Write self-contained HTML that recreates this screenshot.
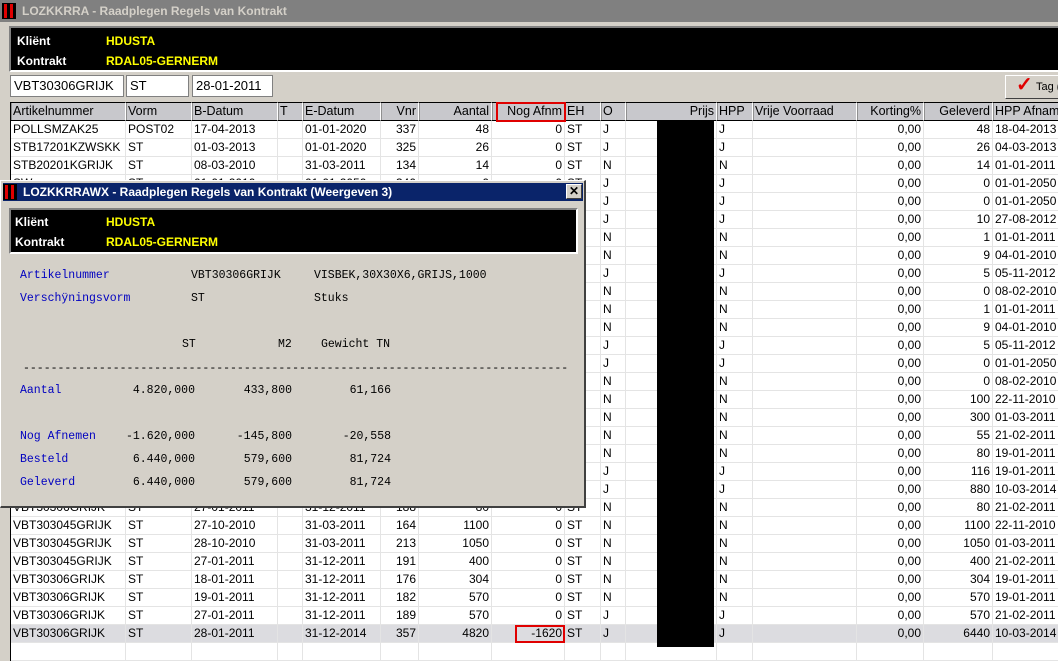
<!DOCTYPE html>
<html><head><meta charset="utf-8">
<style>
*{margin:0;padding:0;box-sizing:border-box}
body{width:1058px;height:647px;overflow:hidden;background:#d4d0c8;font-family:"Liberation Sans",Arial,sans-serif;font-size:12px;position:relative}
.abs{position:absolute}
.tb{left:0;top:0;width:1058px;height:22px;background:#808080;color:#d4d0c8;font-weight:bold;font-size:12px;line-height:22px}
.logo{position:absolute;width:14px;height:16px;background:#000;}
.logo i{position:absolute;top:1px;width:3px;height:14px;background:#e00000}
.blk{background:#000;border:2px solid #fff;border-top-color:#808080;border-left-color:#808080;color:#fff;font-weight:bold}
.blk .l{position:absolute;left:6px}
.blk .v{position:absolute;color:#ffff00}
.inp{background:#fff;border:1px solid #808080;height:22px;line-height:20px;padding-left:3px;font-size:13px}
table{position:absolute;left:10px;top:102px;width:1060px;border-collapse:separate;border-spacing:0;table-layout:fixed;background:#fff;border-left:1px solid #000}
td{height:18px;border-right:1px solid #e4e4e4;border-bottom:1px solid #e4e4e4;padding:0 2px;white-space:nowrap;overflow:hidden;font-size:12px;line-height:17px}
tr.h td{background:#c8c8cc;border-right:1px solid #fff;border-bottom:1px solid #000;font-size:12.5px;line-height:17px;border-top:1px solid #000;box-shadow:inset 1px 0 0 #909090}
td.r{text-align:right}
tr.sel td{background:#dcdce0}
.dlg{left:0;top:180px;width:586px;height:328px;background:#d4d0c8;border:1px solid #fff;border-right:2px solid #404040;border-bottom:2px solid #404040}
.dt{left:2px;top:2px;width:580px;height:18px;background:#0a246a;color:#fff;font-weight:bold;line-height:18px;font-size:12px}
.m{position:absolute;font-family:"Liberation Mono","DejaVu Sans Mono",monospace;font-size:11.5px;line-height:13px;white-space:pre;color:#000}
.b{color:#0000c0}
.rt{text-align:right}
</style></head><body>
<div class="abs tb"><div class="logo" style="left:2px;top:3px"><i style="left:2px"></i><i style="left:8px"></i></div><span style="position:absolute;left:22px">LOZKKRRA - Raadplegen Regels van Kontrakt</span></div>
<div class="abs blk" style="left:9px;top:26px;width:1060px;height:46px"><span class="l" style="top:6px">Kliënt</span><span class="v" style="left:95px;top:6px">HDUSTA</span><span class="l" style="top:26px">Kontrakt</span><span class="v" style="left:95px;top:26px">RDAL05-GERNERM</span></div>
<div class="abs inp" style="left:10px;top:75px;width:114px">VBT30306GRIJK</div>
<div class="abs inp" style="left:126px;top:75px;width:63px">ST</div>
<div class="abs inp" style="left:192px;top:75px;width:81px">28-01-2011</div>
<div class="abs" style="left:1005px;top:75px;width:60px;height:24px;border:1px solid #fff;border-right-color:#404040;border-bottom-color:#404040;background:#d4d0c8;font-size:11px;line-height:22px"><span style="position:absolute;left:10px;top:-2px;color:#e00000;font-size:20px;font-weight:bold">✓</span><span style="position:absolute;left:30px">Tag (</span></div>
<table>
<colgroup><col style="width:115px"><col style="width:66px"><col style="width:86px"><col style="width:25px"><col style="width:78px"><col style="width:38px"><col style="width:73px"><col style="width:73px"><col style="width:36px"><col style="width:25px"><col style="width:91px"><col style="width:36px"><col style="width:104px"><col style="width:67px"><col style="width:69px"><col style="width:78px"></colgroup>
<tr class="h"><td>Artikelnummer</td><td>Vorm</td><td>B-Datum</td><td>T</td><td>E-Datum</td><td class="r">Vnr</td><td class="r">Aantal</td><td class="r">Nog Afnm</td><td>EH</td><td>O</td><td class="r">Prijs</td><td>HPP</td><td>Vrije Voorraad</td><td class="r">Korting%</td><td class="r">Geleverd</td><td>HPP Afname</td></tr>
<tr><td>POLLSMZAK25</td><td>POST02</td><td>17-04-2013</td><td></td><td>01-01-2020</td><td class="r">337</td><td class="r">48</td><td class="r">0</td><td>ST</td><td>J</td><td></td><td>J</td><td></td><td class="r">0,00</td><td class="r">48</td><td>18-04-2013</td></tr>
<tr><td>STB17201KZWSKK</td><td>ST</td><td>01-03-2013</td><td></td><td>01-01-2020</td><td class="r">325</td><td class="r">26</td><td class="r">0</td><td>ST</td><td>J</td><td></td><td>J</td><td></td><td class="r">0,00</td><td class="r">26</td><td>04-03-2013</td></tr>
<tr><td>STB20201KGRIJK</td><td>ST</td><td>08-03-2010</td><td></td><td>31-03-2011</td><td class="r">134</td><td class="r">14</td><td class="r">0</td><td>ST</td><td>N</td><td></td><td>N</td><td></td><td class="r">0,00</td><td class="r">14</td><td>01-01-2011</td></tr>
<tr><td>SW</td><td>ST</td><td>01-01-2010</td><td></td><td>01-01-2050</td><td class="r">340</td><td class="r">0</td><td class="r">0</td><td>ST</td><td>J</td><td></td><td>J</td><td></td><td class="r">0,00</td><td class="r">0</td><td>01-01-2050</td></tr>
<tr><td></td><td></td><td></td><td></td><td></td><td></td><td></td><td class="r">0</td><td>ST</td><td>J</td><td></td><td>J</td><td></td><td class="r">0,00</td><td class="r">0</td><td>01-01-2050</td></tr>
<tr><td></td><td></td><td></td><td></td><td></td><td></td><td></td><td class="r">0</td><td>ST</td><td>J</td><td></td><td>J</td><td></td><td class="r">0,00</td><td class="r">10</td><td>27-08-2012</td></tr>
<tr><td></td><td></td><td></td><td></td><td></td><td></td><td></td><td class="r">0</td><td>ST</td><td>N</td><td></td><td>N</td><td></td><td class="r">0,00</td><td class="r">1</td><td>01-01-2011</td></tr>
<tr><td></td><td></td><td></td><td></td><td></td><td></td><td></td><td class="r">0</td><td>ST</td><td>N</td><td></td><td>N</td><td></td><td class="r">0,00</td><td class="r">9</td><td>04-01-2010</td></tr>
<tr><td></td><td></td><td></td><td></td><td></td><td></td><td></td><td class="r">0</td><td>ST</td><td>J</td><td></td><td>J</td><td></td><td class="r">0,00</td><td class="r">5</td><td>05-11-2012</td></tr>
<tr><td></td><td></td><td></td><td></td><td></td><td></td><td></td><td class="r">0</td><td>ST</td><td>N</td><td></td><td>N</td><td></td><td class="r">0,00</td><td class="r">0</td><td>08-02-2010</td></tr>
<tr><td></td><td></td><td></td><td></td><td></td><td></td><td></td><td class="r">0</td><td>ST</td><td>N</td><td></td><td>N</td><td></td><td class="r">0,00</td><td class="r">1</td><td>01-01-2011</td></tr>
<tr><td></td><td></td><td></td><td></td><td></td><td></td><td></td><td class="r">0</td><td>ST</td><td>N</td><td></td><td>N</td><td></td><td class="r">0,00</td><td class="r">9</td><td>04-01-2010</td></tr>
<tr><td></td><td></td><td></td><td></td><td></td><td></td><td></td><td class="r">0</td><td>ST</td><td>J</td><td></td><td>J</td><td></td><td class="r">0,00</td><td class="r">5</td><td>05-11-2012</td></tr>
<tr><td></td><td></td><td></td><td></td><td></td><td></td><td></td><td class="r">0</td><td>ST</td><td>J</td><td></td><td>J</td><td></td><td class="r">0,00</td><td class="r">0</td><td>01-01-2050</td></tr>
<tr><td></td><td></td><td></td><td></td><td></td><td></td><td></td><td class="r">0</td><td>ST</td><td>N</td><td></td><td>N</td><td></td><td class="r">0,00</td><td class="r">0</td><td>08-02-2010</td></tr>
<tr><td></td><td></td><td></td><td></td><td></td><td></td><td></td><td class="r">0</td><td>ST</td><td>N</td><td></td><td>N</td><td></td><td class="r">0,00</td><td class="r">100</td><td>22-11-2010</td></tr>
<tr><td></td><td></td><td></td><td></td><td></td><td></td><td></td><td class="r">0</td><td>ST</td><td>N</td><td></td><td>N</td><td></td><td class="r">0,00</td><td class="r">300</td><td>01-03-2011</td></tr>
<tr><td></td><td></td><td></td><td></td><td></td><td></td><td></td><td class="r">0</td><td>ST</td><td>N</td><td></td><td>N</td><td></td><td class="r">0,00</td><td class="r">55</td><td>21-02-2011</td></tr>
<tr><td></td><td></td><td></td><td></td><td></td><td></td><td></td><td class="r">0</td><td>ST</td><td>N</td><td></td><td>N</td><td></td><td class="r">0,00</td><td class="r">80</td><td>19-01-2011</td></tr>
<tr><td></td><td></td><td></td><td></td><td></td><td></td><td></td><td class="r">0</td><td>ST</td><td>J</td><td></td><td>J</td><td></td><td class="r">0,00</td><td class="r">116</td><td>19-01-2011</td></tr>
<tr><td></td><td></td><td></td><td></td><td></td><td></td><td></td><td class="r">0</td><td>ST</td><td>J</td><td></td><td>J</td><td></td><td class="r">0,00</td><td class="r">880</td><td>10-03-2014</td></tr>
<tr><td>VBT30306GRIJK</td><td>ST</td><td>27-01-2011</td><td></td><td>31-12-2011</td><td class="r">188</td><td class="r">80</td><td class="r">0</td><td>ST</td><td>N</td><td></td><td>N</td><td></td><td class="r">0,00</td><td class="r">80</td><td>21-02-2011</td></tr>
<tr><td>VBT303045GRIJK</td><td>ST</td><td>27-10-2010</td><td></td><td>31-03-2011</td><td class="r">164</td><td class="r">1100</td><td class="r">0</td><td>ST</td><td>N</td><td></td><td>N</td><td></td><td class="r">0,00</td><td class="r">1100</td><td>22-11-2010</td></tr>
<tr><td>VBT303045GRIJK</td><td>ST</td><td>28-10-2010</td><td></td><td>31-03-2011</td><td class="r">213</td><td class="r">1050</td><td class="r">0</td><td>ST</td><td>N</td><td></td><td>N</td><td></td><td class="r">0,00</td><td class="r">1050</td><td>01-03-2011</td></tr>
<tr><td>VBT303045GRIJK</td><td>ST</td><td>27-01-2011</td><td></td><td>31-12-2011</td><td class="r">191</td><td class="r">400</td><td class="r">0</td><td>ST</td><td>N</td><td></td><td>N</td><td></td><td class="r">0,00</td><td class="r">400</td><td>21-02-2011</td></tr>
<tr><td>VBT30306GRIJK</td><td>ST</td><td>18-01-2011</td><td></td><td>31-12-2011</td><td class="r">176</td><td class="r">304</td><td class="r">0</td><td>ST</td><td>N</td><td></td><td>N</td><td></td><td class="r">0,00</td><td class="r">304</td><td>19-01-2011</td></tr>
<tr><td>VBT30306GRIJK</td><td>ST</td><td>19-01-2011</td><td></td><td>31-12-2011</td><td class="r">182</td><td class="r">570</td><td class="r">0</td><td>ST</td><td>N</td><td></td><td>N</td><td></td><td class="r">0,00</td><td class="r">570</td><td>19-01-2011</td></tr>
<tr><td>VBT30306GRIJK</td><td>ST</td><td>27-01-2011</td><td></td><td>31-12-2011</td><td class="r">189</td><td class="r">570</td><td class="r">0</td><td>ST</td><td>J</td><td></td><td>J</td><td></td><td class="r">0,00</td><td class="r">570</td><td>21-02-2011</td></tr>
<tr class="sel"><td>VBT30306GRIJK</td><td>ST</td><td>28-01-2011</td><td></td><td>31-12-2014</td><td class="r">357</td><td class="r">4820</td><td class="r">-1620</td><td>ST</td><td>J</td><td></td><td>J</td><td></td><td class="r">0,00</td><td class="r">6440</td><td>10-03-2014</td></tr>
<tr><td></td><td></td><td></td><td></td><td></td><td></td><td></td><td></td><td></td><td></td><td></td><td></td><td></td><td></td><td></td><td></td></tr>
</table>
<div class="abs" style="left:657px;top:121px;width:57px;height:526px;background:#000"></div>
<div class="abs" style="left:496px;top:102px;width:70px;height:20px;border:2px solid #e00000"></div>
<div class="abs" style="left:515px;top:625px;width:50px;height:18px;border:2px solid #e00000"></div>

<div class="abs dlg">
<div class="abs dt"><div class="logo" style="left:0;top:1px"><i style="left:2px"></i><i style="left:8px"></i></div><span style="position:absolute;left:20px">LOZKKRRAWX - Raadplegen Regels van Kontrakt (Weergeven 3)</span>
<div style="position:absolute;left:563px;top:1px;width:16px;height:15px;background:#d4d0c8;border:1px solid #fff;border-right-color:#404040;border-bottom-color:#404040;color:#000;font-size:12px;line-height:12px;text-align:center">✕</div></div>
<div class="abs blk" style="left:8px;top:27px;width:569px;height:46px;font-size:12px"><span class="l" style="top:5px;left:4px">Kliënt</span><span class="v" style="left:95px;top:5px">HDUSTA</span><span class="l" style="top:25px;left:4px">Kontrakt</span><span class="v" style="left:95px;top:25px">RDAL05-GERNERM</span></div>
<span class="m b" style="left:19px;top:88px">Artikelnummer</span><span class="m" style="left:190px;top:88px">VBT30306GRIJK</span><span class="m" style="left:313px;top:88px">VISBEK,30X30X6,GRIJS,1000</span>
<span class="m b" style="left:19px;top:111px">Verschÿningsvorm</span><span class="m" style="left:190px;top:111px">ST</span><span class="m" style="left:313px;top:111px">Stuks</span>
<span class="m" style="left:181px;top:157px">ST</span><span class="m" style="left:277px;top:157px">M2</span><span class="m" style="left:320px;top:157px">Gewicht TN</span>
<span class="m" style="left:22px;top:181px">-------------------------------------------------------------------------------</span>
<span class="m b" style="left:19px;top:203px">Aantal</span><span class="m rt" style="left:94px;width:100px;top:203px">4.820,000</span><span class="m rt" style="left:191px;width:100px;top:203px">433,800</span><span class="m rt" style="left:290px;width:100px;top:203px">61,166</span>
<span class="m b" style="left:19px;top:249px">Nog Afnemen</span><span class="m rt" style="left:94px;width:100px;top:249px">-1.620,000</span><span class="m rt" style="left:191px;width:100px;top:249px">-145,800</span><span class="m rt" style="left:290px;width:100px;top:249px">-20,558</span>
<span class="m b" style="left:19px;top:272px">Besteld</span><span class="m rt" style="left:94px;width:100px;top:272px">6.440,000</span><span class="m rt" style="left:191px;width:100px;top:272px">579,600</span><span class="m rt" style="left:290px;width:100px;top:272px">81,724</span>
<span class="m b" style="left:19px;top:295px">Geleverd</span><span class="m rt" style="left:94px;width:100px;top:295px">6.440,000</span><span class="m rt" style="left:191px;width:100px;top:295px">579,600</span><span class="m rt" style="left:290px;width:100px;top:295px">81,724</span>
</div>
</body></html>
